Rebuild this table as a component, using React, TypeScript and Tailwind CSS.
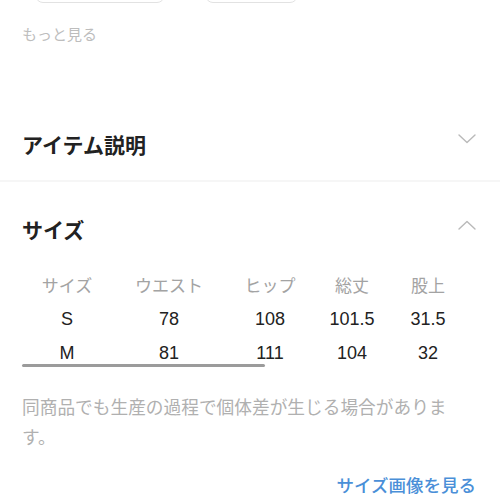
import React from "react";

const FONT = '"Noto Sans CJK JP", "Noto Sans", sans-serif';
const NUMFONT = '"Liberation Sans", "Noto Sans CJK JP", sans-serif';

function Chevron({ up }: { up?: boolean }) {
  return (
    <svg width="18" height="10" viewBox="0 0 18 10" className="shrink-0">
      <polyline
        points={up ? "1,9 9,1.5 17,9" : "1,1 9,8.5 17,1"}
        fill="none"
        stroke="#b9b9b9"
        strokeWidth="1.4"
        strokeLinecap="round"
        strokeLinejoin="round"
      />
    </svg>
  );
}

const headers = ["サイズ", "ウエスト", "ヒップ", "総丈", "股上"];
const rows = [
  ["S", "78", "108", "101.5", "31.5"],
  ["M", "81", "111", "104", "32"],
];
const widths = ["w-[90px]", "w-[114px]", "w-[88px]", "w-[76px]", "w-[76px]"];

export default function App() {
  return (
    <div
      className="w-[500px] h-[500px] overflow-hidden bg-white flex flex-col"
      style={{ fontFamily: FONT }}
    >
      {/* top buttons (cut off) */}
      <div className="h-[3px] overflow-hidden flex items-end shrink-0">
        <div className="flex items-end">
          <div className="ml-[35px] w-[130px] h-[30px] border border-[#e2e2e2] rounded-[8px]" />
          <div className="ml-[40px] w-[93px] h-[30px] border border-[#e2e2e2] rounded-[8px]" />
        </div>
      </div>

      <div className="mt-[21px] pl-[22px] text-[15px] leading-[20px] text-[#bdbdbd]">
        もっと見る
      </div>

      {/* アイテム説明 */}
      <div className="mt-[85px] pl-[22px] pr-[24px] flex items-start justify-between h-[30px]">
        <span className="text-[21px] leading-[30px] font-bold text-[#222]">アイテム説明</span>
        <div className="mt-[5px]">
          <Chevron />
        </div>
      </div>

      <div className="mt-[21px] h-[2px] bg-[#f6f6f6]" />

      {/* サイズ */}
      <div className="mt-[32px] pl-[22px] pr-[24px] flex items-start justify-between h-[30px]">
        <span className="text-[21px] leading-[30px] font-bold text-[#222]">サイズ</span>
        <div className="mt-[6px]">
          <Chevron up />
        </div>
      </div>

      {/* table */}
      <div className="relative mt-[24px] pl-[22px]">
        <div className="flex h-[34px] items-center text-[17px] text-[#a3a3a3]">
          {headers.map((h, i) => (
            <div key={h} className={`${widths[i]} text-center`}>
              {h}
            </div>
          ))}
        </div>
        {rows.map((r) => (
          <div
            key={r[0]}
            className="flex h-[34px] items-center text-[18px] text-[#222]"
            style={{ fontFamily: NUMFONT }}
          >
            {r.map((c, i) => (
              <div key={i} className={`${widths[i]} text-center`}>
                {c}
              </div>
            ))}
          </div>
        ))}
        <div className="absolute left-[22px] top-[96px] w-[243px] h-[3px] rounded-full bg-[#9b9b9b]" />
      </div>

      <p className="mt-[21px] ml-[22px] w-[436px] text-[17.7px] leading-[30px] text-[#b0b0b0]">
        同商品でも生産の過程で個体差が生じる場合があります。
      </p>

      <div className="mt-[19px] pr-[24px] flex justify-end">
        <span className="text-[17.5px] leading-[30px] font-medium text-[#4a8fd8]">
          サイズ画像を見る
        </span>
      </div>
    </div>
  );
}
